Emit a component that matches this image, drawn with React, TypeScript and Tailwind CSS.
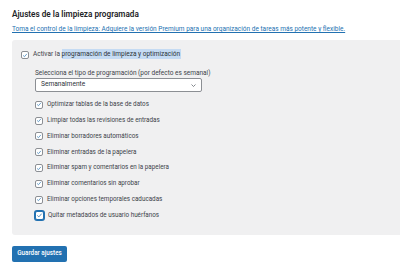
import React from "react";

function Check({ focus = false }: { focus?: boolean }) {
  return (
    <span
      className={
        focus
          ? "relative flex h-[9px] w-[9px] shrink-0 items-center justify-center rounded-[2px] border border-[#2271b1] bg-white shadow-[0_0_0_1px_#2271b1]"
          : "relative flex h-[8px] w-[8px] shrink-0 items-center justify-center rounded-[2px] border border-[#8c8f94] bg-white"
      }
    >
      <svg viewBox="0 0 20 20" className="h-[9px] w-[9px]" fill="none">
        <path d="M4.5 10.5 L8.2 14 L15.5 5.5" stroke="#2271b1" strokeWidth="2.2" strokeLinecap="round" strokeLinejoin="round" />
      </svg>
    </span>
  );
}

const items = [
  "Optimizar tablas de la base de datos",
  "Limpiar todas las revisiones de entradas",
  "Eliminar borradores automáticos",
  "Eliminar entradas de la papelera",
  "Eliminar spam y comentarios en la papelera",
  "Eliminar comentarios sin aprobar",
  "Eliminar opciones temporales caducadas",
  "Quitar metadados de usuario huérfanos",
];

export default function App() {
  return (
    <div
      className="h-[270px] w-[400px] overflow-hidden bg-white pl-[12px] text-[#3c434a]"
      style={{ fontFamily: "Roboto, 'Liberation Sans', Arial, sans-serif" }}
    >
      <div className="pt-[8px] text-[8.2px] font-semibold leading-[12px] text-[#1d2327]">
        Ajustes de la limpieza programada
      </div>
      <div className="mt-[4px] text-[6.5px] leading-[10px] text-[#2271b1] underline">
        Toma el control de la limpieza: Adquiere la versión Premium para una organización de tareas más potente y flexible.
      </div>
      <div className="mt-[6px] h-[195px] w-[400px] rounded-l-[3px] bg-[#f0f0f1] pl-[9px] pt-[10px]">
        <div className="flex h-[10px] items-center gap-[4px] text-[6.5px]">
          <Check />
          <span>
            Activar la{" "}
            <span className="bg-[#c5dbf3] py-[1px] pr-[1px] text-[#2c3338]">programación de limpieza y optimización</span>
          </span>
        </div>
        <div className="ml-[14px] mt-[9px] text-[6.5px] leading-[8px]">
          Selecciona el tipo de programación (por defecto es semanal)
        </div>
        <div className="ml-[14px] mt-[1px] flex h-[14px] w-[167px] items-center justify-between rounded-[2px] border border-[#8c8f94] bg-white pl-[5px] pr-[5px] text-[6.6px] text-[#2c3338]">
          <span>Semanalmente</span>
          <svg viewBox="0 0 10 6" className="h-[3px] w-[5px]" fill="none">
            <path d="M1 1 L5 5 L9 1" stroke="#50575e" strokeWidth="1.4" />
          </svg>
        </div>
        <div className="ml-[14px] mt-[5px] flex flex-col">
          {items.map((t, i) => (
            <div key={t} className="flex h-[15.8px] items-center gap-[4px] text-[6.3px]">
              <Check focus={i === items.length - 1} />
              <span>{t}</span>
            </div>
          ))}
        </div>
      </div>
      <div className="mt-[11px] flex h-[16px] w-[55px] items-center justify-center rounded-[2px] bg-[#2271b1] text-[6.3px] font-medium text-white">
        Guardar ajustes
      </div>
    </div>
  );
}
